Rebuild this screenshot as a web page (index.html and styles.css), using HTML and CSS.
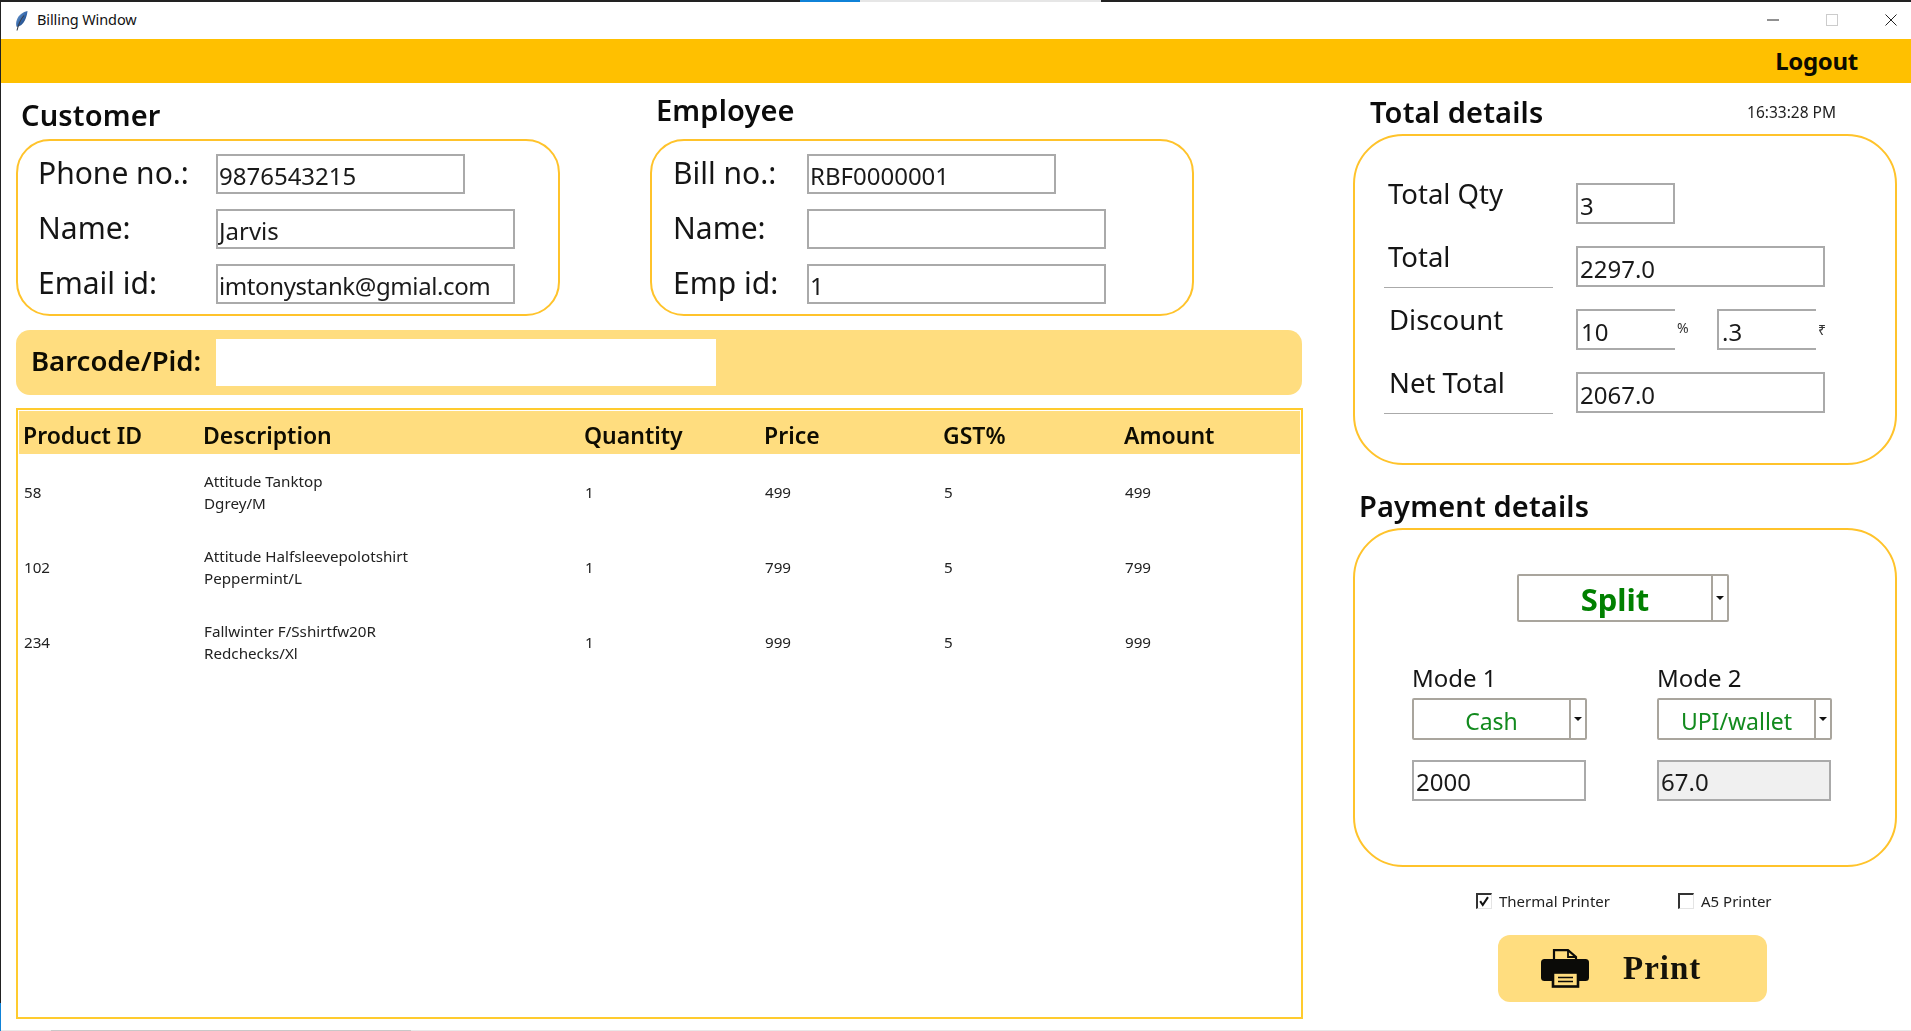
FILE: index.html
```html
<!DOCTYPE html>
<html lang="en">
<head>
<meta charset="utf-8">
<title>Billing Window</title>
<link rel="stylesheet" href="styles.css">
</head>
<body>
<div class="window">
  <div class="edge"><div class="edge-dark"></div><div class="edge-blue"></div></div>
  <div class="content">
    <div class="topline"><span class="tl-a"></span><span class="tl-b"></span><span class="tl-c"></span><span class="tl-d"></span></div>
    <header class="titlebar">
      <svg class="feather" viewBox="0 0 13 20" aria-hidden="true">
        <defs><linearGradient id="fg" x1="0" y1="0" x2="1" y2="1"><stop offset="0" stop-color="#7fa9d6"/><stop offset=".55" stop-color="#2f62a8"/><stop offset="1" stop-color="#27364d"/></linearGradient></defs>
        <path d="M12.5 0C8 .8 3.5 4 1.8 9 .9 11.5.9 14 1.8 16 5 15.5 8 13 9.8 9.5 11.3 6.500 12.300 3 12.500 0Z" fill="url(#fg)"/>
        <path d="M9 4.500C6 8 3.500 12.500 2 19.500" fill="none" stroke="#3a3f48" stroke-width="1.100"/>
      </svg>
      <span class="title-text">Billing Window</span>
      <div class="controls">
        <svg class="ctl ctl-min" viewBox="0 0 12 12" aria-hidden="true"><path d="M0 6H12" stroke="#222" stroke-width="1"/></svg>
        <svg class="ctl ctl-max" viewBox="0 0 12 12" aria-hidden="true"><rect x=".5" y=".5" width="11" height="11" fill="none" stroke="#ccc"/></svg>
        <svg class="ctl ctl-close" viewBox="0 0 12 12" aria-hidden="true"><path d="M.5 .5L11.500 11.500M11.500 .5L.5 11.500" stroke="#222" stroke-width="1"/></svg>
      </div>
    </header>
    <nav class="menubar"><span class="logout">Logout</span></nav>
    <main class="main">
      <section class="left">
        <div class="parties">
          <div class="party">
            <h2 class="head head-customer">Customer</h2>
            <div class="panel panel-customer">
              <span class="lbl">Phone no.:</span><div class="field field-short">9876543215</div>
              <span class="lbl">Name:</span><div class="field field-long">Jarvis</div>
              <span class="lbl">Email id:</span><div class="field field-long field-email">imtonystank@gmial.com</div>
            </div>
          </div>
          <div class="party">
            <h2 class="head head-employee">Employee</h2>
            <div class="panel panel-employee">
              <span class="lbl">Bill no.:</span><div class="field field-short">RBF0000001</div>
              <span class="lbl">Name:</span><div class="field field-long"></div>
              <span class="lbl">Emp id:</span><div class="field field-long">1</div>
            </div>
          </div>
        </div>
        <div class="barcode">
          <span class="barcode-label">Barcode/Pid:</span>
          <div class="barcode-input"></div>
        </div>
        <div class="table">
          <div class="thead">
            <span>Product ID</span><span>Description</span><span>Quantity</span><span>Price</span><span>GST%</span><span>Amount</span>
          </div>
          <div class="trow">
            <span>58</span><span>Attitude Tanktop<br>Dgrey/M</span><span>1</span><span>499</span><span>5</span><span>499</span>
          </div>
          <div class="trow">
            <span>102</span><span>Attitude Halfsleevepolotshirt<br>Peppermint/L</span><span>1</span><span>799</span><span>5</span><span>799</span>
          </div>
          <div class="trow">
            <span>234</span><span>Fallwinter F/Sshirtfw20R<br>Redchecks/Xl</span><span>1</span><span>999</span><span>5</span><span>999</span>
          </div>
        </div>
      </section>
      <aside class="right">
        <div class="total-head">
          <h2 class="head head-total">Total details</h2>
          <span class="clock">16:33:28 PM</span>
        </div>
        <div class="panel-total">
          <span class="tlbl">Total Qty</span>
          <div class="tval"><div class="field field-qty">3</div></div>
          <span class="tlbl tlbl-line">Total</span>
          <div class="tval"><div class="field field-wide">2297.0</div></div>
          <span class="tlbl tlbl-disc">Discount</span>
          <div class="tval disc">
            <div class="field field-open">10</div><span class="unit">%</span>
            <div class="field field-open">.3</div><span class="unit unit-rs">₹</span>
          </div>
          <span class="tlbl tlbl-line tlbl-disc">Net Total</span>
          <div class="tval"><div class="field field-wide">2067.0</div></div>
        </div>
        <h2 class="head head-pay">Payment details</h2>
        <div class="panel-pay">
          <div class="drop drop-split"><span class="drop-text">Split</span><span class="drop-btn"><i class="arrow"></i></span></div>
          <div class="modes">
            <div class="mode">
              <span class="mode-lbl">Mode 1</span>
              <div class="drop"><span class="drop-text">Cash</span><span class="drop-btn"><i class="arrow"></i></span></div>
              <div class="field field-mode">2000</div>
            </div>
            <div class="mode">
              <span class="mode-lbl">Mode 2</span>
              <div class="drop"><span class="drop-text">UPI/wallet</span><span class="drop-btn"><i class="arrow"></i></span></div>
              <div class="field field-mode field-off">67.0</div>
            </div>
          </div>
        </div>
        <div class="checks">
          <label class="check check-a">
            <svg class="box" viewBox="0 0 15 15" aria-hidden="true"><path d="M2.500 7L5.500 11.500 11.500 2.500" fill="none" stroke="#111" stroke-width="2.400"/></svg>
            <span>Thermal Printer</span>
          </label>
          <label class="check">
            <span class="box"></span>
            <span>A5 Printer</span>
          </label>
        </div>
        <div class="print">
          <svg class="print-icon" viewBox="0 0 48 39" aria-hidden="true">
            <rect x="0" y="10" width="48" height="22" rx="3.500" fill="#0b0b08"/>
            <path d="M13 11V1.200H27L35 8V11Z" fill="#ffdd7f" stroke="#0b0b08" stroke-width="2.200"/>
            <path d="M27 1.200V8H35" fill="none" stroke="#0b0b08" stroke-width="1.800"/>
            <rect x="12" y="23.500" width="25" height="14" fill="#ffdd7f" stroke="#0b0b08" stroke-width="2.600"/>
            <path d="M17 28.500H32M17 32.500H32" stroke="#0b0b08" stroke-width="1.700"/>
          </svg>
          <span class="print-text">Print</span>
        </div>
      </aside>
    </main>
    <div class="bottomline"><span class="bl-a"></span><span class="bl-b"></span><span class="bl-c"></span></div>
  </div>
</div>
</body>
</html>
```

FILE: styles.css
```css
* { box-sizing: border-box; }
html, body { margin: 0; padding: 0; }
body {
  width: 1911px;
  height: 1031px;
  overflow: hidden;
  background: #fff;
  color: #111;
  font-family: "Noto Sans", "Open Sans", sans-serif;
}
.window { display: flex; width: 1911px; height: 1031px; }
.edge { width: 1px; display: flex; flex-direction: column; flex: none; }
.edge-dark { height: 1003px; background: #222; }
.edge-blue { flex: 1; background: #0f82d8; }
.content { flex: 1; display: flex; flex-direction: column; min-width: 0; }

.topline { display: flex; height: 2px; flex: none; background: #222; }
.tl-a { width: 799px; }
.tl-b { width: 60px; background: #0f82d8; }
.tl-c { width: 241px; background: #e6e6e6; }

.titlebar { height: 37px; flex: none; display: flex; align-items: center; padding-left: 14px; }
.feather { width: 13px; height: 20px; margin-right: 9px; margin-top: 0; }
.title-text { font-size: 14.500px; letter-spacing: -.1px; line-height: 20px; margin-top: -4px; color: #111; flex: 1; }
.controls { display: flex; align-items: center; margin-right: 14px; margin-top: -1px; gap: 47px; }
.ctl { width: 12px; height: 12px; display: block; }

.menubar {
  height: 44px;
  flex: none;
  background: #ffc000;
  display: flex;
  justify-content: flex-end;
  align-items: center;
  padding-right: 53px;
}
.logout { font-size: 24px; font-weight: 700; letter-spacing: -.3px; margin-top: -2px; color: #0c0c00; }

.main { flex: 1; display: flex; padding-left: 15px; min-height: 0; filter: blur(.3px); }
.left { width: 1287px; flex: none; display: flex; flex-direction: column; }
.right { width: 544px; flex: none; margin-left: 50px; }

.parties { display: flex; gap: 90px; height: 232px; }
.party { width: 544px; }
.head { margin: 0; font-size: 29px; font-weight: 600; line-height: 40px; letter-spacing: .15px; color: #0c0c0c; }
.head-customer { height: 56px; padding: 12px 0 0 5px; }
.head-employee { height: 56px; padding: 7px 0 0 6px; }
.head-total { padding: 9px 0 0 17px; }
.head-pay { height: 63px; padding: 21px 0 0 6px; }

.panel {
  height: 177px;
  border: 2px solid #ffc32b;
  border-radius: 34px;
  display: grid;
  grid-template-rows: 40px 40px 40px;
  row-gap: 15px;
  align-items: center;
  padding-top: 13px;
}
.panel-customer { grid-template-columns: 177px 1fr; padding-left: 21px; }
.panel-employee { grid-template-columns: 132px 1fr; padding-left: 22px; }
.lbl { font-size: 30px; line-height: 40px; color: #151515; margin: -3px 0 0 -1px; }
.panel-employee .field { margin-left: 1px; }

.field {
  height: 40px;
  border: 2px solid #aaa;
  background: #fff;
  font-size: 24px;
  line-height: 36px;
  padding: 2px 0 0 1px;
  color: #1a1a1a;
  white-space: nowrap;
  overflow: hidden;
}
.field-short { width: 249px; }
.field-long { width: 299px; }
.field-email { letter-spacing: -.4px; }
.field-qty { width: 99px; height: 41px; padding: 3px 0 0 2px; }
.field-wide { width: 249px; height: 41px; padding: 3px 0 0 2px; }
.field-open { width: 99px; height: 41px; border-width: 2px 0 2px 2px; padding: 3px 0 0 3px; }
.field-mode { height: 41px; width: 174px; margin-top: 20px; padding-left: 2px; }
.field-off { background: #f0f0f0; }

.barcode {
  height: 65px;
  width: 1286px;
  margin-top: 15px;
  background: #ffdd7f;
  border-radius: 14px;
  display: flex;
  align-items: center;
  padding-left: 15px;
}
.barcode-label { width: 185px; font-size: 27.500px; font-weight: 600; line-height: 40px; margin-top: -3px; color: #0e0c02; }
.barcode-input { width: 500px; height: 47px; background: #fff; }

.table {
  height: 611px;
  margin-top: 13px;
  border: 2px solid #ffcb2e;
  padding: 1px 1px 0 1px;
}
.thead, .trow {
  display: grid;
  grid-template-columns: 180px 381px 180px 179px 181px 1fr;
}
.thead {
  height: 43px;
  background: #ffdd7f;
  padding: 6px 0 0 4px;
  font-size: 23px;
  font-weight: 600;
  line-height: 36px;
  color: #0e0c02;
}
.trow {
  height: 75px;
  padding-left: 5px;
  align-items: center;
  font-size: 15.200px;
  line-height: 22px;
  color: #222;
}

.total-head { height: 51px; display: flex; justify-content: space-between; padding-right: 61px; }
.clock { font-size: 15.500px; line-height: 22px; margin-top: 18px; color: #222; }
.panel-total {
  height: 331px;
  border: 2px solid #ffc32b;
  border-radius: 50px;
  display: grid;
  grid-template-columns: 192px 1fr;
  grid-template-rows: repeat(4, 41px);
  row-gap: 22px;
  padding: 47px 0 0 29px;
}
.tlbl { width: 169px; height: 41px; padding-left: 4px; font-size: 27.500px; line-height: 22px; color: #151515; }
.tlbl-line { height: 42px; border-bottom: 1px solid #aaa; }
.tlbl-disc { padding-left: 5px; }
.disc { display: flex; }
.unit { width: 42px; padding: 9px 0 0 2px; font-size: 14px; line-height: 20px; color: #333; }
.unit-rs { padding: 11px 0 0 2px; }

.panel-pay {
  height: 339px;
  border: 2px solid #ffc32b;
  border-radius: 50px;
  padding: 44px 0 0 57px;
}
.drop {
  display: flex;
  height: 42px;
  width: 175px;
  border: 2px solid #a9a59d;
  border-radius: 2px;
  background: #fff;
  color: #128a1e;
  font-size: 23px;
}
.drop-text { flex: 1; text-align: center; line-height: 42px; white-space: nowrap; }
.drop-btn {
  width: 16px;
  flex: none;
  border-left: 2px solid #a9a59d;
  display: flex;
  align-items: center;
  justify-content: center;
}
.arrow {
  display: block;
  width: 0;
  height: 0;
  border-left: 4px solid transparent;
  border-right: 4px solid transparent;
  border-top: 4px solid #111;
}
.drop-split {
  width: 212px;
  height: 48px;
  margin-left: 105px;
  font-size: 31px;
  font-weight: 700;
  color: #008000;
}
.drop-split .drop-text { line-height: 46px; }
.modes { display: grid; grid-template-columns: 175px 175px; column-gap: 70px; margin-top: 39px; }
.mode-lbl { display: block; font-size: 24px; line-height: 34px; margin-bottom: 3px; color: #151515; }

.checks { display: flex; margin-top: 25px; padding-left: 123px; }
.check { display: flex; align-items: center; gap: 7px; font-size: 15px; line-height: 18px; color: #222; }
.check-a { width: 202px; }
.box {
  display: block;
  width: 16px;
  height: 16px;
  border-style: solid;
  border-width: 2px 1px 1px 2px;
  border-color: #333 #e4e4e4 #e4e4e4 #333;
  background: #fff;
}
.print {
  width: 269px;
  height: 67px;
  margin: 25px 0 0 145px;
  background: #ffdd7f;
  border-radius: 12px;
  display: flex;
  align-items: center;
  padding-left: 43px;
}
.print-icon { width: 48px; height: 39px; display: block; margin-right: 34px; }
.print-text { font-family: "Liberation Serif", serif; font-size: 33px; font-weight: 700; letter-spacing: 1px; line-height: 40px; margin-top: -2px; color: #14120a; }

.bottomline { height: 1px; flex: none; display: flex; background: #e8e8e8; }
.bl-a { width: 50px; }
.bl-b { width: 360px; background: #c8c8c8; }
```
